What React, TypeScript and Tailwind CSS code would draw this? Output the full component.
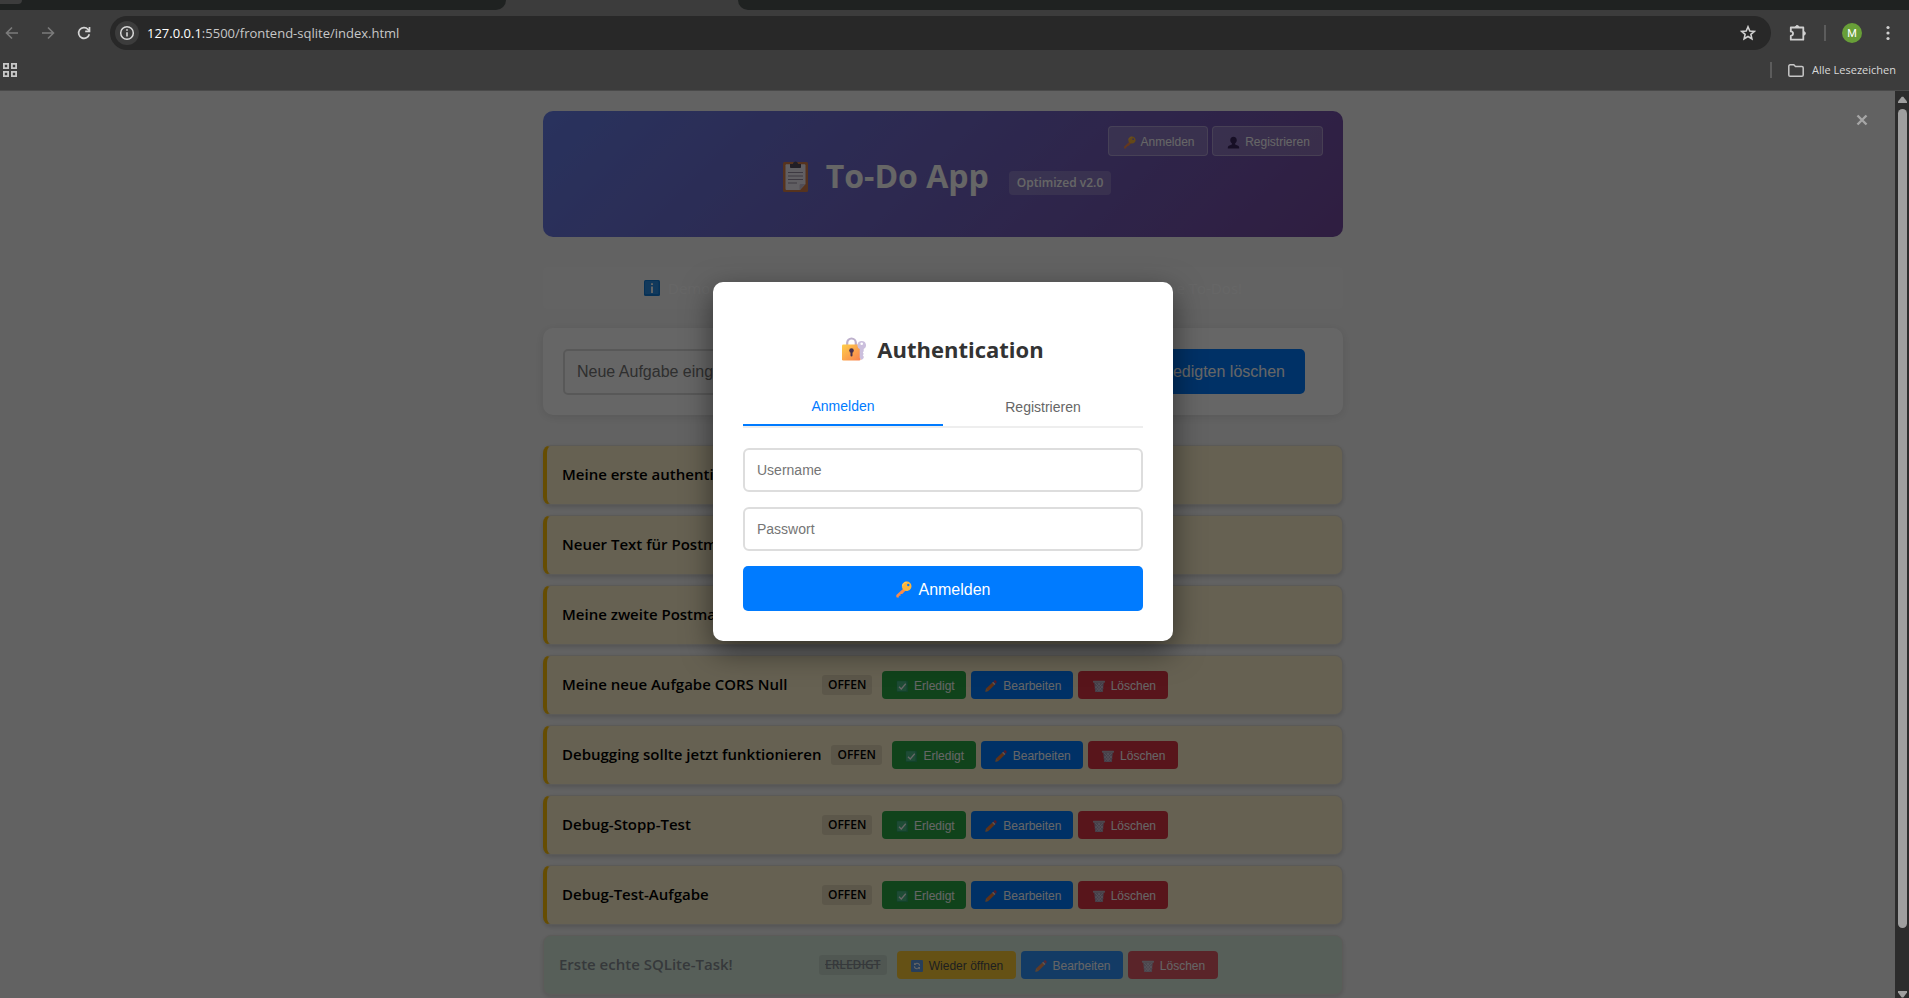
import type { ReactNode } from "react";

const ui = "font-['Open_Sans','Noto_Sans',sans-serif]";

/* ---------- Emoji drawings ---------- */

function KeyEmoji({ className }: { className: string }) {
  return (
    <svg viewBox="0 0 32 32" className={className} aria-hidden="true">
      <path d="M17 13 2.5 26.5v3.2c0 .8.5 1.3 1.3 1.3h3.4v-3.4h3.2v-3.2h3.2L20 18z" fill="#f98a4b" />
      <path d="M22 1c-5 0-9 4-9 8.800 0 5 4 8.900 9 8.900s9-4 9-8.900C31 5 27 1 22 1zm3 4.400a2.300 2.300 0 1 1 0 4.600 2.300 2.300 0 0 1 0-4.600z" fill="#fcb53b" />
      <path d="M14.500 9c0-4 3.500-6.500 7.500-6.500" stroke="#ffd46b" strokeWidth="1.500" fill="none" />
    </svg>
  );
}

function PersonEmoji({ className }: { className: string }) {
  return (
    <svg viewBox="0 0 32 32" className={className} aria-hidden="true">
      <path d="M16 2c-5 0-8 3.600-8 8.200 0 3.300 1.700 6.200 4 7.500v3L4.500 24C2.800 24.800 2 26.500 2 28.500V31h28v-2.500c0-2-.8-3.700-2.500-4.500L20 20.700v-3c2.300-1.300 4-4.200 4-7.500C24 5.600 21 2 16 2z" fill="#3a2760" />
    </svg>
  );
}

function ClipboardEmoji({ className }: { className: string }) {
  return (
    <svg viewBox="0 0 25 31" className={className} aria-hidden="true">
      <rect x="0" y="1" width="25" height="30" rx="1.500" fill="#d6804c" />
      <path d="M2.500 4.500c0-.8.5-1.300 1.300-1.300h17.400c.8 0 1.300.5 1.300 1.300V23L17 29H3.800c-.8 0-1.300-.5-1.300-1.300z" fill="#f3eef8" />
      <path d="M16.500 29v-4.500c0-1 .6-1.500 1.500-1.500h4.500z" fill="#cdc4d6" />
      <path d="M7 3h3c0-3.500 5-3.500 5 0h3v3.200c0 .5-.3.800-.8.800H7.800c-.5 0-.8-.3-.8-.8z" fill="#544b5c" />
      <path d="M5 11.500h15M5 15h15M5 18.500h15M5 22h9" stroke="#998ea4" strokeWidth="1" />
    </svg>
  );
}

function InfoEmoji({ className }: { className: string }) {
  return (
    <svg viewBox="0 0 16 16" className={className} aria-hidden="true">
      <rect width="16" height="16" rx="1.500" fill="#0f7ad8" />
      <rect x="1" y="1" width="13.500" height="13" rx="1" fill="#2c8fe6" />
      <path d="M8 3.200v1.900M8 6.500V13" stroke="#fff" strokeWidth="1.900" />
    </svg>
  );
}

function LockKeyEmoji({ className }: { className: string }) {
  return (
    <svg viewBox="0 0 24 24" className={className} aria-hidden="true">
      <defs>
        <linearGradient id="lock-body" x1="0" y1="0" x2="1" y2="1">
          <stop offset="0" stopColor="#ffcf4a" />
          <stop offset="1" stopColor="#f8804e" />
        </linearGradient>
      </defs>
      <path d="M5.200 9V5.800a4.300 4.300 0 0 1 8.600 0V9" fill="none" stroke="#bdb0cc" strokeWidth="2.200" />
      <rect x="0" y="7.500" width="18.500" height="16" rx="1.300" fill="url(#lock-body)" />
      <circle cx="9.500" cy="13.500" r="2.300" fill="#45304f" />
      <rect x="8.500" y="14" width="2" height="5.500" rx="1" fill="#45304f" />
      <path d="M19.700 4a4.300 4.300 0 0 0-2 8.100v8.700l2 2.200 2-2v-1.500l-.9-1.200 1-1.300-1-1.400.9-1.300v-2.200A4.300 4.300 0 0 0 19.700 4zm0 1.500a1.300 1.300 0 1 1 0 2.600 1.300 1.300 0 0 1 0-2.600z" fill="#cbbfdd" />
    </svg>
  );
}

function CheckEmoji({ className }: { className: string }) {
  return (
    <svg viewBox="0 0 16 16" className={className} aria-hidden="true">
      <rect x="1" y="1" width="15" height="15" rx="1" fill="#2ea56d" />
      <rect x="1.500" y="1.500" width="12.500" height="13" rx="1" fill="#4cbd88" />
      <path d="m4 9 3 3 6-7" fill="none" stroke="#fff" strokeWidth="1.600" />
    </svg>
  );
}

function PencilEmoji({ className }: { className: string }) {
  return (
    <svg viewBox="0 0 16 16" className={className} aria-hidden="true">
      <path d="m.5 15.500 1-4.200L10.700 2.500l3 3-9.200 9z" fill="#f07a38" />
      <path d="m.5 15.500 1-4.200 3 3.200z" fill="#c7a17a" />
      <path d="m9.500 3.700 1.500-1.500 3 3-1.500 1.500z" fill="#d6d0e0" />
      <path d="m11.300 1.900 1-1c.7-.6 1.500-.6 2.200 0l.7.700c.6.700.6 1.500 0 2.200l-.9 1.100z" fill="#e0445c" />
    </svg>
  );
}

function TrashEmoji({ className }: { className: string }) {
  return (
    <svg viewBox="0 0 16 16" className={className} aria-hidden="true">
      <path d="M1.500 3h13L13 16H3z" fill="#a99bb3" />
      <path d="m3 4 9.500 11M6.500 4l7 7M3 8.500 9.500 15.500M13 4 3.500 15M9.500 4 2.800 11M13 8 6.500 15.500" stroke="#ddd2e4" strokeWidth="1" />
      <rect x="0" y="1" width="16" height="2.600" rx=".8" fill="#bdb3c4" />
    </svg>
  );
}

function RefreshEmoji({ className }: { className: string }) {
  return (
    <svg viewBox="0 0 16 16" className={className} aria-hidden="true">
      <rect width="16" height="16" rx="1.500" fill="#3f86de" />
      <path d="M4.500 8.500c.2 2 1.700 3.100 3.500 3.100 1 0 1.800-.3 2.400-.9M11.500 7.500C11.300 5.500 9.800 4.400 8 4.400c-1 0-1.800.3-2.400.9" fill="none" stroke="#fff" strokeWidth="1.400" />
      <path d="M4 3.500v3.300h3.300zM12 12.500V9.200H8.700z" fill="#fff" />
    </svg>
  );
}

/* ---------- Browser chrome ---------- */

function TabStrip() {
  return (
    <div className="flex h-[10px] justify-between bg-[#3c3c3c]">
      <div className="h-[10px] w-[506px] rounded-br-[10px] bg-[#1f2221]">
        <div className="h-1 w-[22px] rounded-br-lg bg-[#3c3c3c]" />
      </div>
      <div className="ml-[232px] h-[10px] flex-1 rounded-bl-[10px] bg-[#1f2221]" />
    </div>
  );
}

function Toolbar() {
  return (
    <div className="flex h-[46px] items-center bg-[#3c3c3c]">
      <button aria-label="Zurück" className="ml-1 w-4 text-[#7b7b7b]">
        <svg viewBox="0 0 16 16" className="size-4" fill="none" stroke="currentColor" strokeWidth="1.600">
          <path d="M14 8H3M8 2.500 2.500 8 8 13.500" />
        </svg>
      </button>
      <button aria-label="Vorwärts" className="ml-5 w-4 text-[#7b7b7b]">
        <svg viewBox="0 0 16 16" className="size-4" fill="none" stroke="currentColor" strokeWidth="1.600">
          <path d="M2 8h11M8 2.500 13.500 8 8 13.500" />
        </svg>
      </button>
      <button aria-label="Neu laden" className="ml-5 w-4 text-[#d5d5d5]">
        <svg viewBox="0 0 16 16" className="size-4" fill="none" stroke="currentColor" strokeWidth="1.700">
          <path d="M13.300 9.200A5.400 5.400 0 1 1 12 4.300l1.300 1.400" />
          <path d="M13.500 2v4.300H9.200" />
        </svg>
      </button>
      <div className="ml-[18px] flex h-[34px] flex-1 items-center rounded-full bg-[#282828] pl-[5px] pr-[15px]">
        <button aria-label="Websiteinformationen" className="flex size-6 items-center justify-center rounded-full bg-[#3c3c3c] text-[#d8d8d8]">
          <svg viewBox="0 0 16 16" className="size-4" fill="none" stroke="currentColor" strokeWidth="1.500">
            <circle cx="8" cy="8" r="6.300" />
            <path d="M8 7.200V11.500M8 4.200v1.600" strokeWidth="1.600" />
          </svg>
        </button>
        <div className={`ml-2 flex-1 text-[13px] leading-5 text-[#c7c7c7] ${ui}`}>
          <span className="text-white">127.0.0.1</span>:5500/frontend-sqlite/index.html
        </div>
        <button aria-label="Lesezeichen hinzufügen" className="text-[#d0d0d0]">
          <svg viewBox="0 0 16 16" className="size-4" fill="none" stroke="currentColor" strokeWidth="1.600">
            <path d="m8 1.800 1.800 4.200 4.500.4-3.400 3 1 4.400L8 11.500l-3.900 2.300 1-4.400-3.400-3 4.500-.4z" />
          </svg>
        </button>
      </div>
      <button aria-label="Erweiterungen" className="ml-[18px] text-[#d0d0d0]">
        <svg viewBox="0 0 18 18" className="size-[18px]" fill="none" stroke="currentColor" strokeWidth="1.800">
          <path d="M1.800 3.500h12.500v12.200H1.800v-3.900c3-.2 3-4.200 0-4.400z" strokeLinejoin="round" />
          <path d="M6.500 3.200a1.700 1.700 0 0 1 3.400 0zM14.700 7.700a1.700 1.700 0 0 1 0 3.400z" fill="currentColor" strokeWidth="1" />
        </svg>
      </button>
      <div className="ml-[17px] h-4 w-[2px] bg-[#5c5c5c]" />
      <button aria-label="Profil" className="ml-4 flex size-5 items-center justify-center rounded-full bg-[#689f38] font-['Roboto',sans-serif] text-[11px] leading-none text-white">
        M
      </button>
      <button aria-label="Menü" className="ml-[18px] mr-[13px] text-[#d0d0d0]">
        <svg viewBox="0 0 16 16" className="size-4" fill="currentColor">
          <circle cx="8" cy="2.500" r="1.600" />
          <circle cx="8" cy="8" r="1.600" />
          <circle cx="8" cy="13.500" r="1.600" />
        </svg>
      </button>
    </div>
  );
}

function BookmarkBar() {
  return (
    <div className="flex h-[35px] items-center justify-between border-b border-[#4a4a4a] bg-[#3c3c3c] pb-[6px] pl-[3px] pr-[13px]">
      <button aria-label="Apps" className="text-[#c7c7c7]">
        <svg viewBox="0 0 14 14" className="size-[14px]" fill="none" stroke="currentColor" strokeWidth="1.800">
          <path d="M.900.900h4.200v4.200H.9zM8.900.900h4.200v4.200H8.900zM.9 8.900h4.200v4.200H.9zM8.900 8.900h4.200v4.200H8.900z" />
        </svg>
      </button>
      <div className="flex items-center">
        <div className="h-4 w-[2px] bg-[#5c5c5c]" />
        <a href="#lesezeichen" className={`ml-4 flex items-center gap-2 text-[11px] leading-4 text-[#d8d8d8] ${ui}`}>
          <svg viewBox="0 0 16 13" className="h-[13px] w-4" fill="none" stroke="#c7c7c7" strokeWidth="1.500">
            <path d="M.8 2.200c0-.8.500-1.400 1.300-1.400h3.700l1.700 1.700h6.400c.8 0 1.300.5 1.300 1.300v7.100c0 .8-.5 1.300-1.300 1.300H2.100c-.8 0-1.300-.5-1.300-1.300z" />
          </svg>
          Alle Lesezeichen
        </a>
      </div>
    </div>
  );
}

function Scrollbar() {
  return (
    <div className="flex w-[14px] flex-col items-center bg-[#2c2c2c] pt-[5px]">
      <svg viewBox="0 0 9 7" className="h-[7px] w-[9px]" fill="#9f9f9f" aria-hidden="true">
        <path d="M3.700.700h1.600L9 5.500V7H0V5.500z" />
      </svg>
      <div className="mt-[6px] w-[9px] flex-1 rounded-full bg-[#9f9f9f]" />
      <svg viewBox="0 0 9 7" className="mt-[63px] h-[7px] w-[9px]" fill="#9f9f9f" aria-hidden="true">
        <path d="M0 0h9v1.500L5.300 6.500H3.700L0 1.500z" />
      </svg>
    </div>
  );
}

/* ---------- To-do page ---------- */

function SmallButton({ className, children }: { className: string; children: ReactNode }) {
  return (
    <button className={`flex h-7 items-center justify-center gap-[6px] rounded-[4px] pl-[2px] pt-[1px] text-[12px] leading-4 ${className}`}>
      {children}
    </button>
  );
}

function Header() {
  return (
    <header className="relative flex h-[126px] items-start justify-center rounded-[10px] bg-linear-135 from-[#667eea] to-[#764ba2] pl-2 pt-[43px] text-white">
      <h1 className="flex h-11 items-center text-[32px] font-bold leading-[44px]">
        <ClipboardEmoji className="mr-[18px] h-[31px] w-[25px]" />
        To-Do App
        <span className="ml-5 mt-[13px] rounded-[4px] bg-white/20 px-2 text-[12px] font-semibold leading-6">Optimized v2.0</span>
      </h1>
      <div className="absolute right-5 top-[15px] flex gap-1 font-['Liberation_Sans',sans-serif] text-[12px]">
        <button className="flex h-[30px] w-[100px] items-center justify-center gap-1 rounded-[4px] border border-white/30 bg-white/20 pl-[2px] pt-[2px]">
          <KeyEmoji className="size-[13px]" />
          Anmelden
        </button>
        <button className="flex h-[30px] w-[111px] items-center justify-center gap-[5px] rounded-[4px] border border-white/30 bg-white/20 pl-[2px] pt-[2px]">
          <PersonEmoji className="size-[13px]" />
          Registrieren
        </button>
      </div>
    </header>
  );
}

const tasks = [
  { title: "Meine erste authentifizierte", done: false },
  { title: "Neuer Text für Postman", done: false },
  { title: "Meine zweite Postman Aufgabe", done: false },
  { title: "Meine neue Aufgabe CORS Null", done: false },
  { title: "Debugging sollte jetzt funktionieren", done: false },
  { title: "Debug-Stopp-Test", done: false },
  { title: "Debug-Test-Aufgabe", done: false },
  { title: "Erste echte SQLite-Task!", done: true },
];

function TaskRow({ title, done }: { title: string; done: boolean }) {
  const look = done
    ? "bg-[#d4edda] text-[#6c757d] opacity-80"
    : "border-l-4 border-l-[#ffc107] bg-[#fff3cd] text-black";
  return (
    <li className={`flex h-[60px] items-center rounded-lg border border-[#e3e0da] pl-[15px] shadow-[0_2px_4px_rgba(0,0,0,0.15)] ${look}`}>
      <span className="min-w-[250px] pb-[2px] text-[15px] font-semibold leading-6">{title}</span>
      <span className={`ml-[10px] flex h-5 items-center rounded-[3px] bg-black/10 px-[6px] text-[12px] font-semibold leading-4 ${done ? "line-through" : ""}`}>
        {done ? "ERLEDIGT" : "OFFEN"}
      </span>
      <div className="ml-[10px] flex gap-[5px] font-['Liberation_Sans',sans-serif] text-white">
        {done ? (
          <SmallButton className="w-[119px] bg-[#ffc107] text-[#212529]">
            <RefreshEmoji className="size-3" />
            Wieder öffnen
          </SmallButton>
        ) : (
          <SmallButton className="w-[84px] bg-[#28a745]">
            <CheckEmoji className="size-3" />
            Erledigt
          </SmallButton>
        )}
        <SmallButton className="w-[102px] bg-[#007bff]">
          <PencilEmoji className="size-3" />
          Bearbeiten
        </SmallButton>
        <SmallButton className="w-[90px] bg-[#dc3545]">
          <TrashEmoji className="size-3" />
          Löschen
        </SmallButton>
      </div>
    </li>
  );
}

function TodoPage() {
  return (
    <main className={`mx-auto w-[800px] max-w-full pt-5 ${ui}`}>
      <Header />
      <div className="mt-[30px] flex h-[42px] items-center rounded-[4px] bg-white/20 px-[101px] text-[15px] leading-6 text-white">
        <InfoEmoji className="size-4" />
        <span className="ml-2 flex-1">Demo</span>
        <span>deine To-Dos!</span>
      </div>
      <form className="mt-[19px] flex h-[87px] items-center gap-[10px] rounded-[10px] bg-white pl-5 pr-[38px] font-['Liberation_Sans',sans-serif] text-[16px] shadow-[0_2px_10px_rgba(0,0,0,0.1)]" onSubmit={(e) => e.preventDefault()}>
        <input
          aria-label="Neue Aufgabe"
          placeholder="Neue Aufgabe eingeben"
          className="h-[46px] min-w-0 flex-1 rounded-[5px] border-2 border-[#ddd] bg-white px-3 placeholder:text-[#757575]"
        />
        <button className="h-[45px] rounded-[5px] bg-[#007bff] px-5 text-white">Erledigten löschen</button>
      </form>
      <ul className="mt-[30px] flex flex-col gap-[10px]">
        {tasks.map((task) => (
          <TaskRow key={task.title} {...task} />
        ))}
      </ul>
    </main>
  );
}

/* ---------- Login dialog ---------- */

function AuthDialog() {
  const field =
    "h-11 w-full rounded-[6px] border-2 border-[#ddd] bg-white px-3 text-[14px] text-[#333] outline-none placeholder:text-[#757575]";
  return (
    <div className="absolute inset-0 flex items-start justify-center bg-black/60 pr-[9px] pt-[191px]">
      <button aria-label="Schließen" className="absolute right-[27px] top-[23px] text-[#a6a6a6]">
        <svg viewBox="0 0 12 12" className="size-3" fill="none" stroke="currentColor" strokeWidth="2.400">
          <path d="m1.500 1.500 9 9M10.500 1.500l-9 9" />
        </svg>
      </button>
      <div role="dialog" aria-labelledby="auth-title" className="w-[460px] rounded-[10px] bg-white px-[30px] pb-[30px] pt-[50px] font-['Liberation_Sans',sans-serif] shadow-[0_10px_30px_rgba(0,0,0,0.5)]">
        <h2 id="auth-title" className={`flex h-[34px] items-center justify-center text-[22px] font-bold leading-[34px] text-[#333] ${ui}`}>
          <LockKeyEmoji className="mr-[11px] size-6" />
          Authentication
        </h2>
        <div role="tablist" className="mt-[18px] flex h-11 border-b-2 border-[#eee] text-[14px] leading-4">
          <button role="tab" aria-selected="true" className="flex-1 border-b-2 border-[#007bff] pt-1 text-[#007bff]">
            Anmelden
          </button>
          <button role="tab" aria-selected="false" className="flex-1 pt-1 text-[#666]">
            Registrieren
          </button>
        </div>
        <form className="mt-5 flex flex-col gap-[15px]" onSubmit={(e) => e.preventDefault()}>
          <input aria-label="Username" placeholder="Username" className={field} />
          <input aria-label="Passwort" type="password" placeholder="Passwort" className={field} />
          <button className="flex h-[45px] items-center justify-center gap-[6px] rounded-[5px] bg-[#007bff] pt-[2px] text-[16px] text-white">
            <KeyEmoji className="size-[17px]" />
            Anmelden
          </button>
        </form>
      </div>
    </div>
  );
}

export default function App() {
  return (
    <div className="flex h-screen flex-col overflow-hidden bg-[#3c3c3c]">
      <TabStrip />
      <Toolbar />
      <BookmarkBar />
      <div className="flex min-h-0 flex-1">
        <div className="relative min-w-0 flex-1 overflow-hidden bg-[#f5f5f5] pr-[9px]">
          <TodoPage />
          <AuthDialog />
        </div>
        <Scrollbar />
      </div>
    </div>
  );
}
